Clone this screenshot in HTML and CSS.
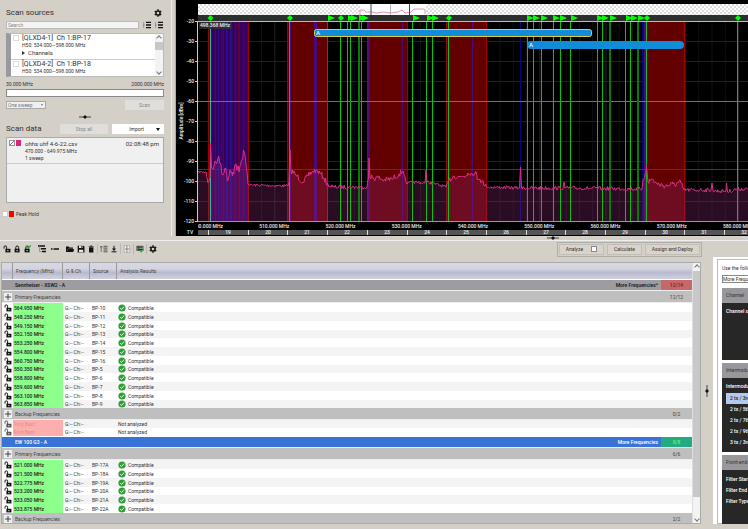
FILE: index.html
```html
<!DOCTYPE html>
<html lang="en">
<head>
<meta charset="utf-8">
<title>Frequency coordination</title>
<link rel="stylesheet" href="styles.css">
</head>
<body>
<svg class="defs" aria-hidden="true">
  <symbol id="unlock" viewBox="0 0 8 8"><path d="M1 3.6V2.2a1.3 1.3 0 0 1 2.6 0V4" fill="none" stroke="currentColor" stroke-width="1"/><path d="M2.4 3.8h5v3.6h-5z" fill="currentColor"/><path d="M4.4 5h1v1.2h-1z" fill="#fff"/></symbol>
  <symbol id="lock" viewBox="0 0 8 8"><path d="M2.8 4V2.4a1.4 1.4 0 0 1 2.8 0V4" fill="none" stroke="currentColor" stroke-width="1"/><path d="M1.6 3.8h5v3.6h-5z" fill="currentColor"/><path d="M3.6 5h1v1.2h-1z" fill="#fff"/></symbol>
  <symbol id="gear" viewBox="0 0 8 8"><circle cx="4" cy="4" r="2.1" fill="none" stroke="currentColor" stroke-width="1.5"/><path d="M4 .3v1.2M4 6.5v1.2M.8 2.15l1 .6M6.2 5.25l1 .6M.8 5.85l1-.6M6.2 2.75l1-.6" stroke="currentColor" stroke-width="1.5"/></symbol>
  <symbol id="list" viewBox="0 0 8 8"><path d="M3 1.3h5M3 4h5M3 6.7h5" stroke="#111" stroke-width="1.3"/><path d="M.6 1v6M0 4h2" stroke="#777" stroke-width=".6"/></symbol>
  <symbol id="ok" viewBox="0 0 8 8"><circle cx="4" cy="4" r="3.6" fill="#2f9e35"/><path d="M2.2 4.2l1.3 1.3 2.5-2.9" fill="none" stroke="#fff" stroke-width=".9"/></symbol>
  <symbol id="plus" viewBox="0 0 8 8"><path d="M0 0h8v8H0z" fill="#eee"/><path d="M4 1v6M1 4h6" stroke="#333" stroke-width=".9"/></symbol>
</svg>

<section class="top">
  <aside class="sidebar">
    <div class="head"><h2>Scan sources</h2><button class="icon" aria-label="Settings"><svg><use href="#gear"/></svg></button></div>
    <div class="search">
      <input type="text" placeholder="Search" aria-label="Search">
      <button class="icon" aria-label="Expand"><svg><use href="#list"/></svg></button>
      <button class="icon" aria-label="Collapse"><svg><use href="#list"/></svg></button>
    </div>
    <div class="sources">
      <div class="items">
        <div class="source"><label><input type="checkbox">[QLXD4-1]&nbsp; Ch 1:BP-17</label><p>H50: 534.000—598.000 MHz</p><p class="ch"><i></i>Channels</p></div>
        <div class="source"><label><input type="checkbox">[QLXD4-2]&nbsp; Ch 1:BP-18</label><p>H50: 534.000—598.000 MHz</p></div>
      </div>
      <div class="scroll"><b class="up"></b><span class="thumb"></span><b class="down"></b></div>
    </div>
    <div class="limits"><span>30.000 MHz</span><span>2000.000 MHz</span></div>
    <div class="range"></div>
    <div class="run">
      <div class="pick"><select aria-label="Sweep mode"><option>One sweep</option></select></div>
      <button class="btn off">Scan</button>
    </div>
    <svg class="grip" viewBox="0 0 12 4"><path d="M0 2h12" stroke="#444"/><path d="M4 2l2-2 2 2-2 2z" fill="#111"/></svg>
    <div class="data-head"><h2>Scan data</h2><button class="btn off">Stop all</button><button class="btn import">Import<i></i></button></div>
    <div class="files">
      <div class="file">
        <input type="checkbox" checked aria-label="Show ohhs uhf 4-6-22.csv"><span class="swatch pink"></span>
        <div class="desc"><strong>ohhs uhf 4-6-22.csv</strong><p>470.000 - 649.975 MHz</p><p>1 sweep</p></div>
        <time>02:08:48 pm</time>
      </div>
    </div>
    <label class="peak"><input type="checkbox"><span class="swatch red"></span>Peak Hold</label>
  </aside>
  <div class="vsplit"></div>
  <div class="chart"><svg id="chart" viewBox="176 0 572 236" preserveAspectRatio="xMinYMin slice" role="img" aria-label="Spectrum"></svg></div>
</section>

<div class="hsplit"><svg class="grip" viewBox="0 0 12 4"><path d="M0 2h12" stroke="#444"/><path d="M4 2l2-2 2 2-2 2z" fill="#111"/></svg></div>

<nav class="toolbar">
  <button class="icon" aria-label="Unlock"><svg><use href="#unlock"/></svg></button>
  <button class="icon" aria-label="Lock"><svg><use href="#lock"/></svg></button>
  <button class="icon" aria-label="Lock compatible"><svg viewBox="0 0 8 8"><use href="#lock"/><path d="M3.5 1.5l1.5 1.8L8 .3" fill="none" stroke="#2bb539" stroke-width="1.4"/></svg></button>
  <button class="icon gap" aria-label="Add group"><svg viewBox="0 0 8 8"><path d="M0 1h7M3 3.8h5M4 6.6h4" stroke="#111" stroke-width="1.5"/><path d="M1.5 1v3H3M1.5 4v2.6H4" fill="none" stroke="#777" stroke-width=".6"/></svg></button>
  <button class="icon" aria-label="Remove"><svg viewBox="0 0 8 8"><path d="M0 4h1.5M2.5 4H8" stroke="#111" stroke-width="1.4"/></svg></button>
  <button class="icon gap" aria-label="Open"><svg viewBox="0 0 8 8"><path d="M0 1.5h2.7l.8 1H7v1.2H2L.7 6.5H8V4L6.8 7H0z" fill="#111"/><path d="M2 4h6L6.6 7H.6z" fill="#111"/></svg></button>
  <button class="icon" aria-label="Save"><svg viewBox="0 0 8 8"><path d="M.7.7h5.8l1 1v5.8H.7z" fill="#111"/><path d="M2 .8h3.6v2.3H2zM2 4.7h4.2v2.5H2z" fill="#e8e6e0"/><path d="M4.2 1h1v1.8h-1z" fill="#111"/></svg></button>
  <button class="icon" aria-label="Delete"><svg viewBox="0 0 8 8"><path d="M2 2.2h4.4v5.2H2zM1.6 1.2h5.2v.6H1.6zM3.3.6h1.8v.6H3.3z" fill="#111"/></svg></button>
  <hr>
  <button class="icon" aria-label="Sort"><svg viewBox="0 0 8 8"><path d="M3.5 1.3h4M3.5 3.1h4M3.5 5h4M3.5 6.8h4" stroke="#333" stroke-width=".8"/><path d="M1.2 7V1M0 2.6L1.2 1l1.2 1.6" fill="none" stroke="#333" stroke-width=".6"/></svg></button>
  <button class="icon" aria-label="Export"><svg viewBox="0 0 8 8"><path d="M4 .8v3.5M1.5 6.8h5" stroke="#111"/><path d="M2 3.5h4L4 6z" fill="#111"/></svg></button>
  <hr>
  <button class="icon" aria-label="Columns"><svg viewBox="0 0 8 8"><path d="M1.2.7h5.6v6.6H1.2z" fill="#eee" stroke="#999" stroke-width=".6"/><path d="M3.9.7v6.6M2 4h4.4" stroke="#666" stroke-width=".7"/></svg></button>
  <hr>
  <button class="icon" aria-label="Report"><svg viewBox="0 0 8 8"><path d="M.5.8h6.8v5H.5z" fill="#333"/><path d="M1 2h1M2.5 2H7M1 3.5h1M2.5 3.5H7M1 5h1" stroke="#bbb" stroke-width=".6"/><path d="M3.6 5.2l1.5 1.6L8 4" fill="none" stroke="#2bb539" stroke-width="1.3"/></svg></button>
  <hr>
  <button class="icon" aria-label="Preferences"><svg><use href="#gear"/></svg></button>
  <div class="actions">
    <label class="cell"><span>Analyze</span><input type="checkbox"></label>
    <button class="cell">Calculate</button>
    <button class="cell">Assign and Deploy</button>
  </div>
</nav>

<main class="bottom">
  <div class="grid">
    <div class="tablewrap">
      <table>
        <colgroup><col class="c-lock"><col class="c-freq"><col class="c-gch"><col class="c-src"><col><col class="c-count"></colgroup>
        <thead><tr><th></th><th>Frequency (MHz)</th><th>G &amp; Ch</th><th class="sorted">Source</th><th>Analysis Results</th><th></th></tr></thead>
        <tbody id="rows"></tbody>
      </table>
    </div>
    <div class="scroll tall"><b class="up"></b><span class="thumb"></span><b class="down"></b></div>
  </div>
  <div class="vgrip"><svg viewBox="0 0 4 12"><path d="M2 0v12" stroke="#444"/><path d="M2 4l2 2-2 2-2-2z" fill="#111"/></svg></div>
  <aside class="settings">
    <div class="inner">
      <label for="profile">Use the following</label>
      <input id="profile" type="text" value="More Frequencies">
      <h3>Channel</h3>
      <div class="panel p1"><h4>Channel spacing</h4></div>
      <h3>Intermodulation</h3>
      <div class="panel p2"><h4>Intermodulation</h4>
        <ul><li class="on">2 tx / 3rd order</li><li>2 tx / 5th order</li><li>2 tx / 7th order</li><li>2 tx / 9th order</li><li>3 tx / 3rd order</li></ul></div>
      <h3>Front-end</h3>
      <div class="panel p3"><h4>Filter Start</h4><h4>Filter End</h4><h4>Filter Type</h4></div>
    </div>
  </aside>
</main>
<script src="app.js"></script>
</body>
</html>
```
FILE: styles.css
```css
* { box-sizing: border-box; }
html, body { height: 100%; }
body {
  margin: 0; display: flex; flex-direction: column; overflow: hidden;
  background: #d4d0c8; color: #333; font: 5px/8px Roboto, sans-serif;
}
h2, h3, h4, p, ul { margin: 0; padding: 0; font-weight: 400; font-size: 5px; }
ul { list-style: none; }
button, input, select { font: inherit; color: inherit; margin: 0; border-radius: 0; }
button { border: 0; padding: 0; background: none; }
input[type="checkbox"] {
  appearance: none; width: 6px; height: 6px; flex: none;
  background: #fff; border: 1px solid #ccc;
}
.defs { display: none; }
.icon { flex: none; width: 8px; height: 8px; color: #111; display: block; }
.icon svg { display: block; width: 8px; height: 8px; }
.grip { display: block; width: 12px; height: 4px; }

.top { display: flex; flex: none; height: 236px; }
.sidebar {
  width: 172px; flex: none; padding: 8px 7px 0 6px;
  display: flex; flex-direction: column; border-right: 1px solid #eee;
}
.sidebar h2 { font-size: 8px; line-height: 10px; color: #333; }
.head { display: flex; justify-content: space-between; align-items: center; padding-right: 2px; height: 10px; }
.search { display: flex; align-items: center; gap: 4px; margin-top: 3px; padding-right: 1px; }
.search input { flex: 1; min-width: 0; height: 8px; padding: 0 1px; background: #f4f4f4; border: 1px solid #bbb; }
.search input::placeholder { color: #888; }
.sources { display: flex; height: 44px; margin-top: 4px; background: #fff; border: 1px solid #bbb; border-left: 5px solid #999aa0; }
.items { flex: 1; overflow: hidden; }
.source { padding: 0 0 0 11px; height: 26px; border-bottom: 1px solid #ccc; }
.source label { display: flex; align-items: center; font-size: 7px; line-height: 8px; margin-left: -9px; }
.source label input { margin-right: 3px; border-color: #ddd; }
.source p { line-height: 7px; }
.source .ch { display: flex; align-items: center; gap: 3px; font-size: 6px; line-height: 8px; }
.ch i { border-left: 3px solid #333; border-top: 2px solid transparent; border-bottom: 2px solid transparent; }
.scroll { width: 8px; flex: none; display: flex; flex-direction: column; align-items: stretch; background: #f3f3f3; }
.scroll b { height: 8px; display: grid; place-items: center; }
.scroll b::after { content: ""; width: 3px; height: 3px; border: solid #777; border-width: 1px 0 0 1px; transform: rotate(45deg); }
.scroll .down::after { transform: rotate(225deg); }
.scroll .down { margin-top: auto; }
.scroll .thumb { height: 8px; background: #c8c8c8; }
.limits { display: flex; justify-content: space-between; margin-top: 3px; }
.range { height: 8px; margin-top: 1px; background: #fff; border: 1px solid #888; }
.run { display: flex; justify-content: space-between; align-items: center; margin-top: 3px; }
.pick { width: 40px; height: 8px; display: flex; align-items: center; border: 1px solid #aaa; background: #f0f0f0; }
.pick select { appearance: none; flex: 1; min-width: 0; height: 6px; line-height: 6px; padding: 0 0 0 1px; border: 0; background: none; color: #777; }
.pick::after { content: ""; margin: 0 2px; border-top: 2px solid #777; border-left: 1px solid transparent; border-right: 1px solid transparent; }
.btn { height: 10px; border-radius: 1px; background: #fff; color: #333; }
.btn.off { background: #e0deda; color: #888; }
.run .btn { width: 39px; }
.sidebar .grip { align-self: center; margin-top: 5px; }
.data-head { display: flex; align-items: center; gap: 4px; margin-top: 5px; }
.data-head h2 { width: 50px; }
.data-head .btn { flex: 1 1 0; min-width: 0; }
.data-head .import { display: flex; align-items: center; justify-content: flex-end; gap: 12px; padding-right: 4px; }
.import i { border-top: 3px solid #111; border-left: 2px solid transparent; border-right: 2px solid transparent; }
.files { height: 66px; margin-top: 3px; background: #f0f0f0; border: 1px solid #aaa; }
.file { display: flex; height: 26px; padding: 2px 4px 0 2px; border-bottom: 1px solid #ccc; }
.file input { border-color: #999; }
.file input:checked { background: linear-gradient(135deg, #fff 40%, #777 45%, #777 55%, #fff 60%); }
.file time { font-size: 6px; }
.swatch { width: 5px; height: 6px; margin: 0 4px 0 1px; }
.pink { background: #d8287e; }
.red { background: #f00; }
.desc { flex: 1; white-space: nowrap; }
.desc strong { display: block; font-weight: 400; font-size: 6px; line-height: 8px; color: #333; }
.desc p { line-height: 7px; }
.peak { display: flex; align-items: center; margin: 7px 0 0 -4px; }
.peak .swatch { margin-right: 2px; }
.vsplit { width: 4px; flex: none; border-right: 1px solid #aaa; }
.chart { flex: 1; min-width: 0; background: #000; overflow: hidden; }
.chart svg { display: block; width: 100%; height: 236px; font-family: Roboto, sans-serif; }
.chart text { font-size: 5px; font-weight: 500; fill: #eee; text-anchor: middle; }
.chart .big { font-size: 6px; }

.hsplit { flex: none; height: 5px; display: flex; justify-content: center; border-bottom: 1px solid #eee; padding-left: 357px; }
.toolbar { flex: none; display: flex; align-items: center; gap: 2px; height: 16px; padding-left: 3px; }
.toolbar .gap { margin-left: 5px; }
.toolbar .gap + .icon { margin-left: 3px; }
.toolbar .gap ~ .gap + .icon { margin-left: 1px; }
.toolbar hr { width: 1px; height: 10px; margin: 0; border: 0; background: #bbb8b0; }
.actions { margin-left: auto; margin-right: 46px; display: flex; border: 1px solid #b0ada6; height: 15px; padding: 2px; gap: 5px; }
.cell { display: flex; align-items: center; justify-content: center; gap: 8px; height: 9px; padding: 0 6px; outline: 1px solid #c2beb5; background: #d8d4cc; color: #333; }
.cell input { border-color: #888; }

.bottom { flex: 1; min-height: 0; display: flex; border-bottom: 5px solid #d4d0c8; }
.grid { flex: 1; min-width: 0; margin: 5px 0 0 1px; display: flex; background: #fff; border: 1px solid #aaa; }
.tablewrap { flex: 1; min-width: 0; overflow: hidden; }
table { width: 100%; table-layout: fixed; border-collapse: separate; border-spacing: 0; white-space: nowrap; }
td, th { padding: 0; height: 9px; line-height: 8px; overflow: hidden; }
.c-lock { width: 11px; } .c-freq { width: 50px; } .c-gch { width: 27px; } .c-src { width: 27px; } .c-count { width: 31px; }
th {
  height: 16px; text-align: left; padding-left: 3px; font-weight: 400; color: #444;
  background: linear-gradient(#d8d8e6, #d4d4e0 35%, #b9bacf 60%, #d0d0de);
  border-right: 1px solid #999;
}
th:nth-last-child(-n+2) { border-right: 0; }
td svg { display: block; width: 8px; height: 8px; margin: 0 auto; color: #111; }
.row:nth-child(even) td { background: #f4f4f4; }
.row.short td { height: 8px; }
.row td.freq { background: #8cff8c; color: #222; font-weight: 500; padding-left: 1px; }
.row.empty td.freq { background: #ffaeae; color: #d98f8f; font-weight: 400; }
.row.empty td svg { opacity: .7; }
.row td.gch { padding-left: 2px; }
.row td.src { padding-left: 2px; }
.result { display: flex; align-items: center; gap: 2px; padding-left: 1px; height: 8px; line-height: 8px; }
.result svg { margin: 0; }
.group td { height: 12px; background: #9c9ca1; color: #111; font-weight: 500; border-top: 1px solid #fff; border-bottom: 1px solid #eee; }
.group .name { padding-left: 2px; }
.group .more { text-align: right; padding-right: 3px; }
.group .n { text-align: center; background: #c4686a; color: #7a2024; }
.group.sel td { background: #3973d6; color: #fff; }
.group.sel .n { background: #22ab80; color: #6cf06c; }
.sub td { height: 12px; background: #bfbfbf; color: #444; border-bottom: 1px solid #eee; }
.sub .name { padding-left: 2px; }
.sub .n { text-align: center; }
.tall { background: #f3f3f3; border-left: 1px solid #ddd; }
.tall .thumb { flex: 1 1 100px; height: auto; margin-bottom: 18px; }
.tall .down { margin-top: 0; }
.vgrip { width: 12px; flex: none; display: grid; place-items: center; }
.vgrip svg { width: 4px; height: 12px; }
.settings { width: 35px; flex: none; padding: 2px 0 0 4px; overflow: hidden; background: #fff; }
.inner { width: 80px; height: 100%; padding: 4px 0 0 4px; border: 1px solid #bbb; white-space: nowrap; }
.inner label { display: block; }
.inner input { display: block; width: 76px; height: 8px; margin: 3px 0 5px; padding: 0; border: 1px solid #888; }
.inner h3 { height: 15px; padding-left: 4px; line-height: 15px; background: #98989c; color: #333; }
.panel { margin-bottom: 3px; padding: 4px 0 0 4px; background: #272727; color: #fff; }
.panel h4 { font-weight: 500; line-height: 8px; }
.p1 { height: 57px; } .p2 { height: 74px; } .p3 { height: 55px; margin: 0; }
.panel li { height: 11px; line-height: 11px; padding-left: 4px; font-weight: 500; }
.panel li.on { margin-top: 3px; background: #b4c9f0; color: #222; }
.p3 h4 { line-height: 11px; }
```
FILE: app.js
```js
// Channel table
const use = id => `<svg><use href="#${id}"/></svg>`;
const sub = (name, n) => `<tr class="sub"><td>${use('plus')}</td><td class="name" colspan="4">${name}</td><td class="n">${n}</td></tr>`;
const group = (name, more, n, cls) => `<tr class="group ${cls}"><td></td><td class="name" colspan="3">${name}</td><td class="more">${more}</td><td class="n">${n}</td></tr>`;
const rows = list => list.map(([f, s], i) => `<tr class="row${i % 4 === 3 ? ' short' : ''}"><td>${use('unlock')}</td><td class="freq">${f} MHz</td><td class="gch">G:-- Ch:--</td><td class="src">${s}</td><td colspan="2"><div class="result">${use('ok')}Compatible</div></td></tr>`).join('');
const empty = `<tr class="row short empty"><td>${use('unlock')}</td><td class="freq">Find Best</td><td class="gch">G:-- Ch:--</td><td></td><td colspan="2"><div class="result">Not analyzed</div></td></tr>`;
document.getElementById('rows').innerHTML =
  group('Sennheiser - XSW2 - A', 'More Frequencies*', '12/14', '') +
  sub('Primary Frequencies', '12/12') +
  rows([['564.950', 'BP-10'], ['548.250', 'BP-11'], ['549.150', 'BP-12'], ['552.150', 'BP-13'], ['553.250', 'BP-14'], ['554.800', 'BP-15'], ['560.750', 'BP-16'], ['550.350', 'BP-5'], ['558.800', 'BP-6'], ['559.600', 'BP-7'], ['563.100', 'BP-8'], ['563.850', 'BP-9']]) +
  sub('Backup Frequencies', '0/2') + empty + empty +
  group('EW 100 G3 - A', 'More Frequencies', '8/8', 'sel') +
  sub('Primary Frequencies', '6/6') +
  rows([['521.000', 'BP-17A'], ['521.500', 'BP-18A'], ['522.775', 'BP-19A'], ['523.200', 'BP-20A'], ['533.050', 'BP-21A'], ['533.875', 'BP-22A']]) +
  sub('Backup Frequencies', '2/2');

// Spectrum chart
let seed = 7;
const rnd = () => (seed = (seed * 16807) % 2147483647) / 2147483647;
const rect = (x, y, w, h, fill, extra = '') => `<rect x="${x}" y="${y}" width="${w}" height="${h}" fill="${fill}" ${extra}/>`;
const text = (x, y, s, extra = '') => `<text x="${x}" y="${y}" ${extra}>${s}</text>`;
let o = '<defs><pattern id="hatch" width="4" height="4" patternUnits="userSpaceOnUse"><path d="M0 0h4v4H0z" fill="#fff"/><path d="M0 0h2v2H0zM2 2h2v2H2z" fill="#dedede"/></pattern><clipPath id="plot"><path d="M198 0h2000v236H198z"/></clipPath></defs>';
o += rect(198, 4, 550, 11, 'url(#hatch)') + rect(360, 4, 66, 11, '#fff');
o += '<path d="M360 15V10h4l2 2h6l4 1 8-1 6 1 8-1 4-2 3 3 6-1 3-3h10l1 1v4" fill="none" stroke="#d86a8c" stroke-width=".7"/>';
o += '<path d="M371 4v11M409.500 4v11" stroke="#444"/><path d="M390.500 4v11" stroke="#999" stroke-width=".7"/>';
o += rect(198, 15, 550, 6, '#2b2f2d');
for (let x = 208, i = 0; x < 748; x += 13.25, i++) o += rect(x, 22, 1, 199, i % 5 ? '#101010' : '#202020');
for (let y = 41; y < 221; y += 20) o += rect(198, y, 550, 1, '#202020');
for (const [a, b] of [[208, 249], [287, 328], [367, 408], [446, 487], [646, 685]])
  o += rect(a, 22, b - a, 199, '#620000') + rect(a, 22, 1, 199, '#9c0000') + rect(b - 1, 22, 1, 199, '#9c0000');
o += rect(212, 22, 35, 199, '#38005f');
for (const x of [215, 218, 223, 226, 230, 235, 239, 243]) o += rect(x, 22, 1, 199, '#28108c');
for (const x of [221, 227, 231, 238]) o += rect(x, 22, 1, 199, '#5e0038');
for (const [x, w] of [[290, 1], [314, 3], [368, 2], [402, 1], [472, 1], [644, 2]]) o += rect(x, 22, w, 199, '#4c0880');
for (const [x, w] of [[520, 1], [642, 2]]) o += rect(x, 22, w, 199, '#08087c');

// Trace: x, level, jitter up to the next point
const pts = [[198, 172, 1], [206, 172, 1], [208, 183, 1], [210, 178, 1], [210.500, 143, 0], [211.500, 168, 4], [214, 166, 6], [218, 158, 4], [221, 165, 6], [223, 175, 2], [225, 168, 4], [228, 180, 3], [230, 170, 5], [233, 172, 5], [236, 164, 6], [239, 172, 5], [242, 160, 3], [243.500, 150, 2], [245, 155, 3], [247, 172, 2], [248, 184, 1], [250, 185, 1.400], [288, 186, 1], [289, 182, 1], [290, 150, 0], [291, 170, 3], [297, 176, 3], [303, 182, 3], [308, 176, 3], [312, 172, 3], [316, 170, 2], [321, 174, 3], [324, 178, 3], [327, 184, 2], [330, 186, 3], [333, 187, 2], [367, 187, 2], [368.500, 178, 0], [369, 158, 0], [370, 178, 4], [376, 177, 3], [384, 180, 3], [392, 179, 3], [399, 174, 3], [403, 171, 2], [405, 177, 2], [407, 184, 1.500], [412, 182, 1.500], [425, 183, 1], [426, 170, 0], [427, 182, 1.500], [436, 184, 1.500], [446, 187, 1.500], [449, 180, 3], [454, 176, 3], [460, 177, 4], [464, 176, 5], [468, 173, 2], [475, 174, 4], [480, 179, 3], [485, 185, 1.500], [488, 187, 1.600], [519.500, 188, 1], [520.500, 167, 0], [521.500, 188, 2], [563, 188, 1], [564, 182, 0], [565, 188, 2], [642, 189, 1], [643, 180, 3], [645, 174, 5], [646.500, 166, 0], [648, 182, 3], [652, 179, 3], [657, 184, 3], [666, 186, 3], [673, 184, 4], [681, 183, 2], [684, 190, 2], [700, 190, 2], [711, 190, 1], [712, 183, 0], [713, 191, 2], [726, 191, 1], [726.500, 183, 0], [727.500, 192, 2], [736, 189, 2], [748, 189, 2]];
let d = '';
for (let i = 0; i < pts.length - 1; i++) {
  const [x0, y0, j] = pts[i], [x1, y1] = pts[i + 1];
  d += `${d ? 'L' : 'M'}${x0} ${y0}`;
  for (let x = x0 + .8; j && x < x1 - .4; x += .8) d += `L${x.toFixed(1)} ${(y0 + (y1 - y0) * (x - x0) / (x1 - x0) + (rnd() * 2 - 1) * j).toFixed(1)}`;
}
d += 'L748 189';
o += `<path d="${d}V221H198z" fill="#8c2a70" fill-opacity=".3"/>`;
o += rect(198, 101, 550, 1, '#a86418') + rect(198, 169, 550, 1, '#c80000');
for (const x of [289, 340, 347, 350, 361, 412, 426, 432, 448, 527, 533, 541, 553, 560, 570, 597, 602, 625, 630, 646, 737]) o += rect(x, 22, 1, 199, '#10c010');
for (const [x, w] of [[327, 1], [358, 2], [609, 2], [637, 2]]) o += rect(x, 22, w, 199, '#077d07');
o += rect(210, 22, 1, 199, '#30b8a0');
o += `<path d="${d}" fill="none" stroke="#dc3088" stroke-width="1"/>`;
for (const x of [210.500, 290, 341, 449, 647, 738]) o += `<path d="M${x - 3} 18L${x} 15l3 3-3 3z" fill="#0f0"/>`;
for (const x of [328, 348, 351, 359, 362, 413, 427, 432, 527, 533, 541, 553, 560, 571, 597, 602, 610, 626, 631, 638]) o += `<path d="M${x} 15l7 3-7 3z" fill="#0f0"/>`;
o += rect(198, 21, 550, 1, '#bbb') + rect(197, 21, 1, 201, '#ccc') + rect(198, 221, 550, 1, '#999');
o += rect(199, 22, 33, 7, '#303030', 'fill-opacity=".85"') + text(215, 27, '498.368 MHz');
o += rect(314.500, 29.500, 277, 7, '#118cd8', 'rx="2" stroke="#e0cc38"') + rect(527, 41, 157, 8, '#118cd8', 'rx="4"');
o += text(318, 35, 'A', 'class="big"') + text(531, 47, 'A', 'class="big"');
for (let i = 0; i <= 10; i++) o += rect(195, 21 + i * 20, 3, 1, '#ccc') + `<text x="194" y="${23 + i * 20}" style="text-anchor:end">-${20 + i * 10}</text>`;
o += '<text transform="translate(183 121) rotate(-90)">Amplitude [dBm]</text>';
o += '<g clip-path="url(#plot)">';
for (let i = 0; i <= 8; i++) o += text(208 + i * 66.250, 228, `${500 + i * 10}.000 MHz`);
o += rect(198, 230, 550, 5, '#555');
for (let i = 0; i < 14; i++) o += rect(Math.round(208 + i * 39.700), 230, 1, 5, '#ddd') + text(Math.round(228 + i * 39.700), 234, 19 + i);
o += '</g>' + text(190, 234, 'TV');
document.getElementById('chart').innerHTML = o;
```
